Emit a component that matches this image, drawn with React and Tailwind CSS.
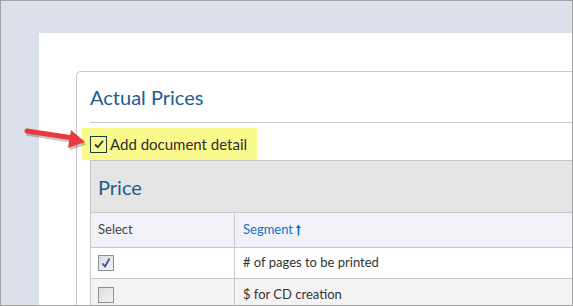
import React from "react";

const TableCheck = ({ checked }) => (
  <span className="flex h-[16px] w-[16px] items-center justify-center border border-[#8f8f8f] bg-gradient-to-br from-[#dcdcdc] to-[#f4f4f4]">
    {checked && (
      <svg width="12" height="12" viewBox="0 0 12 12">
        <path d="M2.5 6.5 L5 9.5 L9.5 1.5" fill="none" stroke="#3b4fa3" strokeWidth="1.8" />
      </svg>
    )}
  </span>
);

const App = () => {
  return (
    <div
      className="relative flex h-[306px] w-[573px] overflow-hidden border border-[#a3a3a3] bg-[#dbe0ea] pl-[38px] pt-[32px]"
      style={{ fontFamily: "Lato, 'Open Sans', sans-serif" }}
    >
      <div className="flex-1 bg-white pl-[37px] pt-[38px]">
        <div className="h-full rounded-tl-[5px] border-l border-t border-[#c8c8c8] pl-[13px]">
          <div className="flex h-[51px] items-center border-b border-[#c8c8c8]">
            <h2 className="text-[20px] leading-none text-[#1f5b8f]">Actual Prices</h2>
          </div>

          <div className="-ml-[8px] mt-[5px] flex h-[32px] w-[175px] items-center gap-[3px] bg-[#fafa8c] pl-[8px]">
            <span className="flex h-[17px] w-[17px] items-center justify-center border-[1.5px] border-[#1c3b3d]">
              <svg width="12" height="12" viewBox="0 0 12 12">
                <path d="M2 6.5 L4.8 9.2 L10 2.8" fill="none" stroke="#1c3b3d" strokeWidth="1.8" />
              </svg>
            </span>
            <span className="text-[15px] text-[#2e2e2e]">Add document detail</span>
          </div>

          <div className="border-l border-t border-[#c8c8c8]">
            <div className="flex h-[52px] items-center border-b border-[#c8c8c8] bg-[#e5e5e5] pl-[7px]">
              <span className="text-[20px] text-[#1f5b8f]">Price</span>
            </div>
            <div className="flex h-[35px] border-b border-[#c8c8c8] bg-[#f0f2f8] text-[13px]">
              <div className="flex w-[144px] items-center border-r border-[#c8c8c8] pl-[7px] text-[#444]">Select</div>
              <div className="flex items-center gap-[3px] pl-[8px] text-[#1a6fc4]">
                Segment
                <svg width="5" height="12" viewBox="0 0 5 12">
                  <path d="M2.5 0.5 L5 4 L3.3 4 L3.3 11.5 L1.7 11.5 L1.7 4 L0 4 Z" fill="#1a6fc4" />
                </svg>
              </div>
            </div>
            <div className="flex h-[31px] border-b border-[#c8c8c8] bg-white text-[13px] text-[#333]">
              <div className="flex w-[144px] items-center border-r border-[#c8c8c8] pl-[7px]">
                <TableCheck checked />
              </div>
              <div className="flex items-center pl-[8px]"># of pages to be printed</div>
            </div>
            <div className="flex h-[31px] bg-[#f3f3f3] text-[13px] text-[#333]">
              <div className="flex w-[144px] items-center border-r border-[#c8c8c8] pl-[7px]">
                <TableCheck />
              </div>
              <div className="flex items-center pl-[8px]">$ for CD creation</div>
            </div>
          </div>
        </div>
      </div>

      <svg className="absolute left-[20px] top-[126px]" width="70" height="28" viewBox="0 0 70 28">
        <g transform="translate(1.5 2.5)" opacity="0.22">
          <path d="M6 4 L52 11" stroke="#000" strokeWidth="5" strokeLinecap="round" />
          <path d="M50 3 L64 15 L47 21 Z" fill="#000" />
        </g>
        <path d="M6 4 L52 11" stroke="#ea3a3e" strokeWidth="5" strokeLinecap="round" />
        <path d="M50 3 L64 15 L47 21 Z" fill="#ea3a3e" />
      </svg>
    </div>
  );
};

export default App;
